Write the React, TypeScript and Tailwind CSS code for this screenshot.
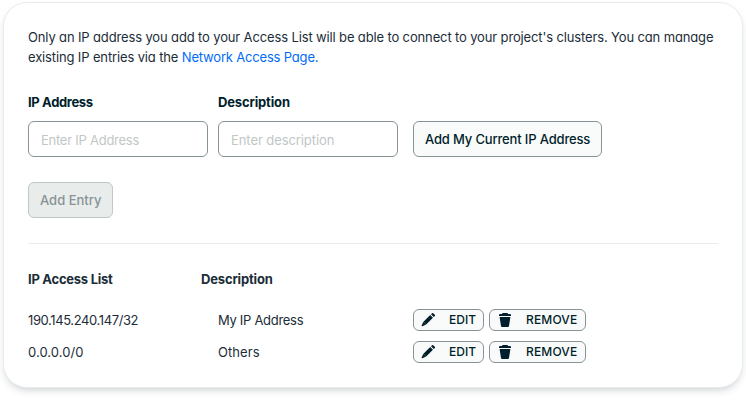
import React from "react";

const entries = [
  { ip: "190.145.240.147/32", description: "My IP Address", ipSpacing: "tracking-[-0.39px]", descriptionSpacing: "tracking-[-0.3px]" },
  { ip: "0.0.0.0/0", description: "Others", ipSpacing: "tracking-[0.05px]", descriptionSpacing: "tracking-[0.08px]" },
];

function PencilIcon() {
  return (
    <svg width="16" height="16" viewBox="0 0 16 16" fill="currentColor" className="shrink-0">
      <path d="M10.228 3.028 12.946 5.716 6.15 12.49 3.432 9.8z" />
      <path d="M11.01 2.247 12.09 1.17a.76.76 0 0 1 1.07 0l1.65 1.64a.76.76 0 0 1 0 1.07l-1.08 1.06z" />
      <path d="M3.432 9.8 6.15 12.49 2.4 14.3a.7.7 0 0 1-.8-.8z" />
    </svg>
  );
}

function TrashIcon() {
  return (
    <svg width="16" height="16" viewBox="0 0 16 16" fill="currentColor" className="shrink-0">
      <path d="M6 1a1 1 0 0 0-1 1H3a1 1 0 0 0-1 1v1h12V3a1 1 0 0 0-1-1h-2a1 1 0 0 0-1-1H6z" />
      <path d="M2.6 5h10.8l-1.4 9.1a1 1 0 0 1-1 .9H5a1 1 0 0 1-1-.9L2.6 5z" />
    </svg>
  );
}

export default function App() {
  return (
    <div className="h-[401px] w-[746px] overflow-hidden bg-white pl-[3px] pt-[2px] font-['Inter',sans-serif] text-[13px] leading-5 text-[#1c2d38] [font-feature-settings:'cv11']">
      <div className="h-[386px] w-[740px] rounded-[24px] border border-[#e8edeb] bg-white px-6 pt-6 shadow-[0_4px_10px_-4px_rgba(0,30,43,0.3)]">
        <p className="whitespace-nowrap tracking-[-0.138px]">
          <span>Only an IP address you add to your Access List will be able to connect to your project's clusters. You can manage</span>
          <br />
          <span>existing IP entries via the </span>
          <a className="tracking-[-0.18px] text-[#016bf8]">Network Access Page.</a>
        </p>

        <div className="mt-[25px] flex items-end">
          <label className="w-[180px]">
            <span className="block font-bold tracking-[-0.35px] text-[#001e2b]">IP Address</span>
            <input
              className="mt-[9px] block h-9 w-full rounded-[6px] border border-[#889397] bg-white px-3 pt-px tracking-[-0.25px] placeholder:text-[#c1c7c6] placeholder:opacity-100"
              placeholder="Enter IP Address"
            />
          </label>
          <label className="ml-[10px] w-[180px]">
            <span className="block font-bold tracking-[-0.15px] text-[#001e2b]">Description</span>
            <input
              className="mt-[9px] block h-9 w-full rounded-[6px] border border-[#889397] bg-white px-3 pt-px tracking-[-0.08px] placeholder:text-[#c1c7c6] placeholder:opacity-100"
              placeholder="Enter description"
            />
          </label>
          <button className="ml-[15px] h-9 w-[189px] whitespace-nowrap rounded-[6px] border border-[#889397] bg-[#f9fbfa] pl-[11px] text-left font-medium tracking-[-0.16px] text-[#001e2b]">
            Add My Current IP Address
          </button>
        </div>

        <button className="mt-[25px] block h-9 w-[85px] whitespace-nowrap rounded-[6px] border border-[#c1c7c6] bg-[#e8edeb] pl-[11px] text-left font-medium text-[#889397]">
          Add Entry
        </button>

        <hr className="mt-[25px] border-[#e8edeb]" />

        <div className="mt-[25px] flex font-bold">
          <div className="w-[173px] tracking-[-0.26px]">IP Access List</div>
          <div className="tracking-[-0.17px]">Description</div>
        </div>

        <div className="mt-5 flex flex-col gap-[10px]">
          {entries.map((entry) => (
            <div key={entry.ip} className="flex h-[22px] items-center">
              <div className={"w-[190px] " + entry.ipSpacing}>{entry.ip}</div>
              <div className={"w-[195px] " + entry.descriptionSpacing}>{entry.description}</div>
              <button className="flex h-[22px] w-[71px] items-center rounded-[6px] border border-[#889397] bg-[#f9fbfa] pl-[6px] text-[12px] font-medium text-[#001e2b]">
                <PencilIcon />
                <span className="ml-[13px]">EDIT</span>
              </button>
              <button className="ml-[5px] flex h-[22px] w-[97px] items-center rounded-[6px] border border-[#889397] bg-[#f9fbfa] pl-[7px] text-[12px] font-medium tracking-[0.15px] text-[#001e2b]">
                <TrashIcon />
                <span className="ml-[13px]">REMOVE</span>
              </button>
            </div>
          ))}
        </div>
      </div>
    </div>
  );
}
